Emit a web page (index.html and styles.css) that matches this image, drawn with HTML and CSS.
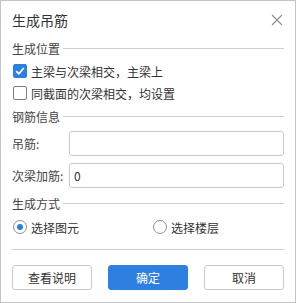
FILE: index.html
```html
<!DOCTYPE html>
<html lang="zh">
<head>
<meta charset="utf-8">
<link rel="stylesheet" href="styles.css">
</head>
<body>
<div class="dialog">
  <div class="header">
    <span class="title">生成吊筋</span>
    <svg class="close" width="12" height="12" viewBox="0 0 12 12"><path d="M1 1L11 11M11 1L1 11" stroke="#8c8c8c" stroke-width="1.1" fill="none"/></svg>
  </div>

  <div class="section s1"><span>生成位置</span><i class="rule"></i></div>
  <div class="check-row"><span class="cb checked"><svg width="14" height="14" viewBox="0 0 14 14"><path d="M3.2 7.2L5.8 9.8L10.8 4.2" stroke="#fff" stroke-width="1.8" fill="none"/></svg></span><span>主梁与次梁相交，主梁上</span></div>
  <div class="check-row"><span class="cb"></span><span>同截面的次梁相交，均设置</span></div>

  <div class="section s2"><span>钢筋信息</span><i class="rule"></i></div>
  <div class="field f1"><label>吊筋:</label><div class="input"></div></div>
  <div class="field f2"><label>次梁加筋:</label><div class="input">0</div></div>

  <div class="section s3"><span>生成方式</span><i class="rule"></i></div>
  <div class="radio-row">
    <div class="radio-item"><span class="rb on"></span><span>选择图元</span></div>
    <div class="radio-item"><span class="rb"></span><span>选择楼层</span></div>
  </div>

  <div class="divider"></div>

  <div class="buttons">
    <div class="btn">查看说明</div>
    <div class="btn primary">确定</div>
    <div class="btn">取消</div>
  </div>
</div>
</body>
</html>
```
FILE: styles.css
```css
* { box-sizing: border-box; }
html, body { margin: 0; padding: 0; background: #fff; }
body {
  font-family: "Noto Sans CJK SC", "Noto Sans", sans-serif;
  font-size: 12px;
  color: #333;
}
.dialog {
  width: 296px;
  height: 303px;
  border: 1px solid #c4c4c4;
  padding: 0 11px;
  display: flex;
  flex-direction: column;
}
.header {
  height: 37px;
  display: flex;
  align-items: center;
  justify-content: space-between;
}
.title { font-size: 14px; color: #333; padding-top: 1px; }
.close { margin-right: 1px; }
.section {
  height: 20px;
  display: flex;
  align-items: center;
  gap: 3px;
  color: #444;
}
.rule { flex: 1; height: 1px; background: #cfcfcf; margin-top: 1px; }
.s1 { margin-top: 0; }
.s2 { margin-top: 2px; }
.s3 { margin-top: 5px; }
.check-row {
  height: 22px;
  display: flex;
  align-items: center;
  gap: 4px;
}
.s1 + .check-row { margin-top: 2px; }
.cb {
  width: 14px;
  height: 14px;
  border: 1px solid #7d7d7d;
  border-radius: 2px;
  background: #fff;
  margin-left: 1px;
  display: flex;
}
.cb.checked { background: #2d7fe0; border-color: #2d7fe0; }
.cb svg { margin: -1px; }
.field {
  display: flex;
  align-items: center;
  height: 25px;
}
.f1 { margin-top: 5px; }
.f2 { margin-top: 7px; }
.field label { width: 57px; color: #444; }
.input {
  flex: 1;
  height: 25px;
  border: 1px solid #c9c9c9;
  border-radius: 3px;
  padding-left: 4px;
  line-height: 23px;
  color: #333;
}
.radio-row {
  height: 22px;
  margin-top: 3px;
  display: flex;
  align-items: center;
}
.radio-item { display: flex; align-items: center; gap: 4px; }
.radio-item:first-child { width: 140px; }
.rb {
  width: 14px;
  height: 14px;
  border-radius: 50%;
  border: 1px solid #8f8f8f;
  margin-left: 1px;
  display: flex;
  align-items: center;
  justify-content: center;
}
.rb.on::after {
  content: "";
  width: 6px;
  height: 6px;
  border-radius: 50%;
  background: #2d7fe0;
}
.divider { height: 1px; background: #cfcfcf; margin-top: 11px; }
.buttons {
  margin-top: 15px;
  display: flex;
  gap: 16px;
}
.btn {
  width: 80px;
  height: 25px;
  border: 1px solid #c9c9c9;
  border-radius: 3px;
  display: flex;
  align-items: center;
  justify-content: center;
  color: #333;
  background: #fff;
}
.btn.primary { background: #2d7fe0; border-color: #2d7fe0; color: #fff; }
```
